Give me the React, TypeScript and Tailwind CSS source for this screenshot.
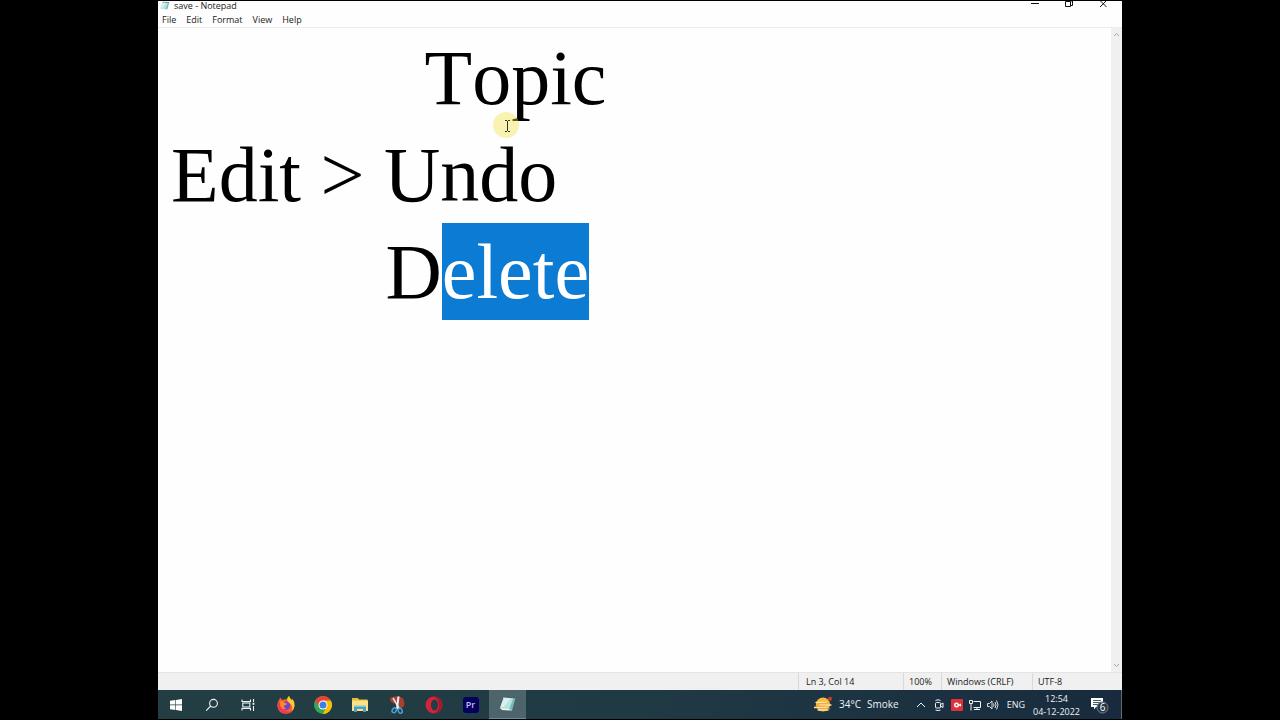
import React, { useEffect, useRef } from 'react';

const NOTE = [
  ' '.repeat(13) + 'Topic',
  'Edit > Undo',
  ' '.repeat(11) + 'Delete',
].join('\n');

const MENUS = ['File', 'Edit', 'Format', 'View', 'Help'];

function NotepadIcon({ className }: { className: string }) {
  return (
    <svg viewBox="0 0 18 18" className={className} aria-hidden="true">
      <path d="M5 2 L16.500 3 L13 15.500 L1 13.500 Z" fill="#75b9bd" />
      <path d="M5 2 L14.500 3 L10 14.500 L1 13 Z" fill="#b5e3e1" />
      <path d="M5 2 L12 2.700 L5 12 L1.500 12 Z" fill="#d9f1ee" />
      <path d="M1 13 L11 14.300 L13 15.500 L3 15 Z" fill="#f3f6f5" />
      <path d="M5 2 L16.500 3" stroke="#405f65" strokeWidth="1" />
    </svg>
  );
}

function WindowsIcon() {
  return (
    <svg viewBox="0 0 12 12" className="size-3" fill="#ffffff" aria-hidden="true">
      <path d="M0 1.700 L5.400 1 V5.600 H0 Z M6 0.900 L12 0 V5.600 H6 Z M0 6.300 H5.400 V11 L0 10.300 Z M6 6.300 H12 V12 L6 11.100 Z" />
    </svg>
  );
}

function SearchIcon() {
  return (
    <svg viewBox="0 0 14 14" className="size-3.5" fill="none" stroke="#f1f4f5" strokeWidth="1.100" aria-hidden="true">
      <circle cx="8.500" cy="5.300" r="3.900" />
      <path d="M5.700 8 L1.200 12.600" />
    </svg>
  );
}

function TaskViewIcon() {
  return (
    <svg viewBox="0 0 14 14" className="size-3.5" fill="none" stroke="#eef2f3" strokeWidth="1.100" aria-hidden="true">
      <path d="M1 1.500 V3.500 H9.500 V1.500 M1 12.500 V10.500 H9.500 V12.500" />
      <rect x="1.800" y="5" width="7" height="4" />
      <path d="M12.500 1 V4 M12.500 8 V13" />
      <rect x="11.600" y="4.800" width="1.800" height="2" fill="#eef2f3" stroke="none" />
    </svg>
  );
}

function FirefoxIcon() {
  return (
    <svg viewBox="0 0 20 20" className="size-5" aria-hidden="true">
      <path d="M3 5 L4.300 2.500 L6 5 Q9 3.700 11 4.500 Q11.500 2 13 1 Q13.500 3.300 16 5.200 L16.500 4 Q19 7 18.500 11 Q17.500 18.500 10 18.800 Q2 18.500 1.300 11 Q1.200 7.500 3 5 Z" fill="#f4612c" />
      <path d="M11 4.500 Q11.500 2 13 1 Q13.500 3.300 16 5.200 L16.500 4 Q19 7 18.500 11 Q18 14 16 16 Q17.200 11 14 8.500 Q11.500 7 11 4.500 Z" fill="#ffc936" />
      <path d="M1.300 10 Q2 18 10 18.800 Q14 18.700 16 16 Q11 18 6.500 14 Q3.500 11 3.500 6 Z" fill="#ef3857" />
      <circle cx="10" cy="10.800" r="4.300" fill="#7543c5" />
      <path d="M4 6.500 Q7 5.500 9 8 L11.500 8.700 Q10 10.500 8 10.500 Q7.500 13 10.500 13.300 Q6.500 15.500 4.500 11.500 Z" fill="#ff8a28" />
    </svg>
  );
}

function ChromeIcon() {
  return (
    <svg viewBox="0 0 20 20" className="size-5" aria-hidden="true">
      <circle cx="10" cy="10" r="9" fill="#34a853" />
      <path d="M2.200 5.500 A9 9 0 0 1 17.800 5.500 L10 6 L6.500 12 Z" fill="#ea4335" />
      <path d="M17.800 5.500 A9 9 0 0 1 9.800 19 L13.500 12 L10 5.500 Z" fill="#fbbc05" />
      <circle cx="10" cy="10" r="4.500" fill="#ffffff" />
      <circle cx="10" cy="10" r="3.500" fill="#3f7ee8" />
    </svg>
  );
}

function ExplorerIcon() {
  return (
    <svg viewBox="0 0 18 18" className="size-4.5" aria-hidden="true">
      <path d="M1 2 H7 L8 3.500 H16.500 V15 H1 Z" fill="#e9b93c" />
      <path d="M1 4.500 H17 V15 H1 Z" fill="#fbe184" />
      <path d="M3 10 H15 V16 H12 V13 H6 V16 H3 Z" fill="#4b9ec0" />
      <path d="M3 9.500 H15 V11 H3 Z" fill="#7fc3d6" />
    </svg>
  );
}

function SnippingIcon() {
  return (
    <svg viewBox="0 0 18 20" className="h-5 w-4.5" fill="none" aria-hidden="true">
      <path d="M2 3 Q8 0 14 2.500 Q17.500 6 16 11 Q14 14 11 12.500 L10 7 L6 8.500 Q1.500 7 2 3 Z" fill="#a8402f" />
      <path d="M5 3 L11.500 14" stroke="#d6dfe3" strokeWidth="1.600" />
      <path d="M10.500 1.500 L9 14" stroke="#f2f6f8" strokeWidth="2" />
      <ellipse cx="6.200" cy="15.300" rx="1.900" ry="2.500" transform="rotate(30 6.200 15.300)" stroke="#4e9dd8" strokeWidth="1.500" />
      <ellipse cx="12.200" cy="15.800" rx="1.900" ry="2.500" transform="rotate(-25 12.200 15.800)" stroke="#4e9dd8" strokeWidth="1.500" />
    </svg>
  );
}

function OperaIcon() {
  return (
    <svg viewBox="0 0 18 18" className="size-4.5" aria-hidden="true">
      <circle cx="9" cy="9" r="8.500" fill="#d32438" />
      <path d="M9 0.500 A8.500 8.500 0 0 1 9 17.500 Q14 15 14 9 Q14 3 9 0.500 Z" fill="#a3192c" />
      <ellipse cx="9.500" cy="9" rx="3.500" ry="5.500" fill="#243c43" />
    </svg>
  );
}

function PremiereIcon() {
  return (
    <span className="flex size-4 items-center justify-center rounded-[3px] bg-[#05005c] text-[9px] leading-none font-semibold text-[#c4bcfc]">
      Pr
    </span>
  );
}

function WeatherIcon() {
  return (
    <svg viewBox="0 0 20 18" className="h-4.5 w-5" aria-hidden="true">
      <circle cx="10" cy="8.500" r="7" fill="#f6bd42" />
      <circle cx="17" cy="2.800" r="2" fill="#d0392b" />
      <path d="M3 6.500 H13 M7 9 H18 M1.500 11.500 H13 M5 14 H15" stroke="#ffe0a0" strokeWidth="1.300" strokeLinecap="round" />
      <path d="M5 7.700 H15 M2 10.200 H12 M6 12.700 H17" stroke="#e8983a" strokeWidth="0.700" strokeLinecap="round" />
    </svg>
  );
}

const APPS = [
  { name: 'Firefox', icon: <FirefoxIcon /> },
  { name: 'Chrome', icon: <ChromeIcon /> },
  { name: 'File Explorer', icon: <ExplorerIcon /> },
  { name: 'Snipping Tool', icon: <SnippingIcon /> },
  { name: 'Opera', icon: <OperaIcon /> },
  { name: 'Premiere Pro', icon: <PremiereIcon /> },
];

function TitleBar() {
  return (
    <header className="flex h-3 shrink-0 items-start justify-between">
      <div className="flex items-center gap-1 pl-0.5">
        <NotepadIcon className="size-2.5" />
        <h1 className="text-[9px] leading-[10px]">save - Notepad</h1>
      </div>
      <div className="flex h-2 items-center gap-6 pr-3.5">
        <button type="button" aria-label="Minimize">
          <svg viewBox="0 0 10 8" className="h-2 w-2.5" stroke="#111111" fill="none">
            <path d="M1 2.500 H9" />
          </svg>
        </button>
        <button type="button" aria-label="Restore">
          <svg viewBox="0 0 10 8" className="h-2 w-2.5" stroke="#111111" fill="none">
            <path d="M1.500 0.500 H6.500 V5.500 H1.500 Z M3 0 H8.500 V4.500 H6.500" />
          </svg>
        </button>
        <button type="button" aria-label="Close">
          <svg viewBox="0 0 10 8" className="h-2 w-2.5" stroke="#111111" fill="none">
            <path d="M2.500 0 L8.500 6 M8 0 L2 6" />
          </svg>
        </button>
      </div>
    </header>
  );
}

function MenuBar() {
  return (
    <nav className="flex h-3.5 shrink-0 items-center gap-2.5 px-1">
      {MENUS.map((menu) => (
        <button key={menu} type="button" className="text-[9px] leading-3">
          {menu}
        </button>
      ))}
    </nav>
  );
}

function Editor() {
  const ref = useRef<HTMLTextAreaElement>(null);

  // Keep everything after the "D" of the last line selected
  useEffect(() => {
    const start = NOTE.indexOf('elete');
    ref.current?.focus();
    ref.current?.setSelectionRange(start, start + 5);
  }, []);

  return (
    <main className="relative flex min-h-0 flex-1 border-t border-[#ececec]">
      <textarea
        ref={ref}
        aria-label="Text editor"
        defaultValue={NOTE}
        spellCheck={false}
        wrap="off"
        className="min-w-0 flex-1 resize-none overflow-hidden bg-transparent pt-px pl-[13px] font-['Palatino_Linotype','Liberation_Serif',serif] text-[78px] leading-[97px] text-black outline-none [font-kerning:none] selection:bg-[#0b7bd4] selection:text-white"
      />
      <div className="flex w-[11px] shrink-0 flex-col items-center justify-between bg-[#f0f0f0] py-0.5">
        <button type="button" aria-label="Scroll up" className="flex">
          <svg viewBox="0 0 9 9" className="size-[9px]" stroke="#a5a5a5" fill="none">
            <path d="M2 6 L4.500 3.500 L7 6" />
          </svg>
        </button>
        <button type="button" aria-label="Scroll down" className="flex">
          <svg viewBox="0 0 9 9" className="size-[9px]" stroke="#a5a5a5" fill="none">
            <path d="M2 3 L4.500 5.500 L7 3" />
          </svg>
        </button>
      </div>

      {/* Pointer with its highlight */}
      <svg viewBox="0 0 28 28" className="pointer-events-none absolute top-[84px] left-[335px] size-7" fill="none" aria-hidden="true">
        <circle cx="13" cy="13" r="13" fill="#f5e23c" opacity="0.400" />
        <path d="M12 8.500 H14 M15 8.500 H17 M14.500 9 V19 M12 19.500 H14 M15 19.500 H17" stroke="#333319" />
      </svg>
    </main>
  );
}

function StatusBar() {
  return (
    <footer className="flex h-[18px] shrink-0 justify-end border-t border-[#e4e4e4] bg-[#f0f0f0] text-[9px] leading-[18px]">
      <span className="w-[105px] border-l border-[#d9d9d9] pl-[7px]">Ln 3, Col 14</span>
      <span className="w-[38px] border-l border-[#d9d9d9] pl-[5px]">100%</span>
      <span className="w-[91px] border-l border-[#d9d9d9] pl-[5px]">Windows (CRLF)</span>
      <span className="w-[90px] border-l border-[#d9d9d9] pl-[5px]">UTF-8</span>
    </footer>
  );
}

function Tray() {
  return (
    <div className="flex h-full items-center text-[#f0f3f5]">
      <button type="button" className="flex items-center gap-1.5 text-[10px]">
        <WeatherIcon />
        <span>34°C</span>
        <span>Smoke</span>
      </button>
      <button type="button" aria-label="Show hidden icons" className="ml-4">
        <svg viewBox="0 0 12 12" className="size-3" fill="none" stroke="currentColor">
          <path d="M2 8 L6 4 L10 8" />
        </svg>
      </button>
      <button type="button" aria-label="Meet Now" className="ml-1.5">
        <svg viewBox="0 0 12 12" className="size-3" fill="none" stroke="currentColor">
          <rect x="2.500" y="3.500" width="5" height="5.500" rx="1" />
          <path d="M7.500 5.500 L10 4 V8.500 L7.500 7 M2.500 1.500 Q5 0 7.500 1.500 M2.500 11 Q5 12.300 7.500 11" />
        </svg>
      </button>
      <button type="button" aria-label="Screen recorder" className="ml-1.5">
        <svg viewBox="0 0 12 12" className="size-3">
          <rect width="12" height="12" rx="1" fill="#df303b" />
          <circle cx="5.500" cy="6" r="2.500" fill="#ffffff" />
          <circle cx="5.500" cy="6" r="1" fill="#df303b" />
          <path d="M7 6 L10 4.500 V7.500 Z" fill="#ffffff" />
        </svg>
      </button>
      <button type="button" aria-label="Network" className="ml-1.5">
        <svg viewBox="0 0 12 12" className="size-3" fill="none" stroke="currentColor">
          <path d="M4.500 2.500 H11.500 V8.500 H4.500 M8 8.500 V10.500 M5 10.500 H11 M0.500 1.500 H3.500 V4.500 H0.500 Z M2 4.500 V11.500" />
        </svg>
      </button>
      <button type="button" aria-label="Volume" className="ml-1.5">
        <svg viewBox="0 0 12 12" className="size-3" fill="none" stroke="currentColor" strokeWidth="0.900">
          <path d="M0.500 4.500 H2.500 L5 2 V10 L2.500 7.500 H0.500 Z M6.500 4.500 Q7.500 6 6.500 7.500 M8 3 Q10 6 8 9 M9.500 1.500 Q12.500 6 9.500 10.500" />
        </svg>
      </button>
      <button type="button" className="ml-2 text-[9px]">
        ENG
      </button>
      <button type="button" className="ml-2 flex flex-col items-center text-[9px] leading-[13px]">
        <span>12:54</span>
        <span>04-12-2022</span>
      </button>
      <button type="button" aria-label="Notifications, 6 new" className="ml-2.5 flex pr-3">
        <svg viewBox="0 0 19 18" className="h-[18px] w-[19px]">
          <path d="M1 2 H13 V11 H6 L4 13.500 V11 H1 Z" fill="#ffffff" />
          <path d="M3 4.500 H11 M3 6.500 H11 M3 8.500 H8" stroke="#1b3042" strokeWidth="0.800" />
          <circle cx="12.500" cy="11.500" r="5.500" fill="#263744" stroke="#75828b" />
          <text x="12.500" y="15" textAnchor="middle" fontSize="10" fill="#ffffff">
            6
          </text>
        </svg>
      </button>
      <span className="h-full w-px bg-[#5d6b77]" />
    </div>
  );
}

function TaskBar() {
  return (
    <div className="flex h-[29px] shrink-0 items-center justify-between bg-linear-to-r from-[#233e43] via-[#203a44] to-[#182b3e]">
      <div className="flex h-full">
        <button type="button" aria-label="Start" className="flex w-9 items-center justify-center">
          <WindowsIcon />
        </button>
        <button type="button" aria-label="Search" className="flex w-9 items-center justify-center">
          <SearchIcon />
        </button>
        <button type="button" aria-label="Task View" className="flex w-9 items-center justify-center">
          <TaskViewIcon />
        </button>
        <div className="flex pl-px">
          {APPS.map((app) => (
            <button key={app.name} type="button" aria-label={app.name} className="flex w-[37px] items-center justify-center">
              {app.icon}
            </button>
          ))}
          <button
            type="button"
            aria-label="Notepad"
            className="flex w-[37px] items-center justify-center border-b border-[#5f8fa8] bg-[#4d646a]"
          >
            <NotepadIcon className="size-4.5" />
          </button>
        </div>
      </div>
      <Tray />
    </div>
  );
}

export default function App() {
  return (
    <div className="h-screen bg-black px-[158px] py-px font-['Segoe_UI','Open_Sans',sans-serif]">
      <div className="flex h-full flex-col bg-[#fefefe] text-[#1a1a1a]">
        <TitleBar />
        <MenuBar />
        <Editor />
        <StatusBar />
        <TaskBar />
      </div>
    </div>
  );
}
